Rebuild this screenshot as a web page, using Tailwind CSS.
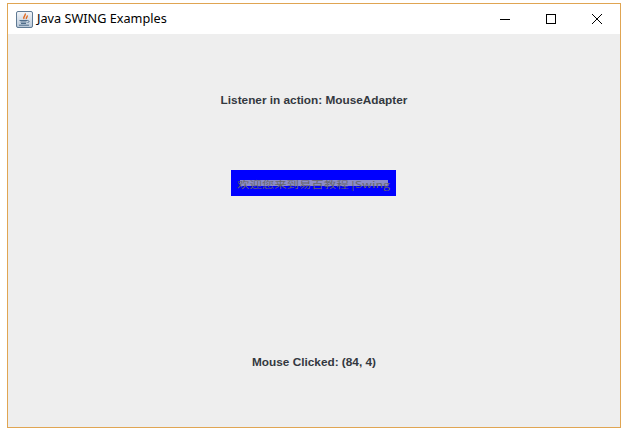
<!DOCTYPE html>
<html>
<head>
<meta charset="utf-8">
<script src="https://cdn.jsdelivr.net/npm/@tailwindcss/browser@4"></script>
</head>
<body class="bg-white w-[628px] h-[432px] overflow-hidden">
<div class="w-[628px] h-[432px] pl-[7px] pt-[3px]">
  <div class="w-[614px] h-[425px] border border-[#e0a552] flex flex-col bg-[#eeeeee]">
    <div class="h-[30px] bg-white flex items-center shrink-0">
      <div class="ml-[8px] mr-[4px] w-[17px] h-[17px] flex items-center justify-center">
        <svg width="17" height="17" viewBox="0 0 17 17">
          <defs><linearGradient id="g" x1="0" y1="0" x2="0" y2="1"><stop offset="0" stop-color="#f2f5f9"/><stop offset="1" stop-color="#b9c8d8"/></linearGradient></defs>
          <rect x="0.5" y="0.5" width="16" height="16" rx="1.5" fill="url(#g)" stroke="#5f7a94"/>
          <path d="M9 2.5 C10.5 4.5 6.5 5.5 8 8 M11 4.5 C12 6 9.5 6.5 10.5 8" stroke="#e2691f" stroke-width="1.4" fill="none"/>
          <path d="M3.5 9.5 H11.5 C13.5 9.5 13.5 11.5 11.5 11.5 M4.5 11 H10.5 M5 12.5 H10 M3 14.2 H13" stroke="#4f6d8a" stroke-width="1" fill="none"/>
        </svg>
      </div>
      <span class="font-['Noto_Sans',sans-serif] text-[12.7px] text-black">Java SWING Examples</span>
      <div class="ml-auto flex items-center text-black">
        <div class="w-[46px] h-[30px] flex items-center justify-center">
          <svg width="10" height="10" viewBox="0 0 10 10"><path d="M0 5.5 H10" stroke="#000" stroke-width="1"/></svg>
        </div>
        <div class="w-[46px] h-[30px] flex items-center justify-center">
          <svg width="10" height="10" viewBox="0 0 10 10"><rect x="0.5" y="0.5" width="9" height="9" fill="none" stroke="#000"/></svg>
        </div>
        <div class="w-[46px] h-[30px] flex items-center justify-center">
          <svg width="10" height="10" viewBox="0 0 10 10"><path d="M0 0 L10 10 M10 0 L0 10" stroke="#000" stroke-width="1"/></svg>
        </div>
      </div>
    </div>
    <div class="flex-1 flex flex-col items-center font-['Liberation_Sans',sans-serif] font-bold text-[11.8px] text-[#333840]">
      <div class="mt-[59px] h-[14px] leading-[14px]">Listener in action: MouseAdapter</div>
      <div class="mt-[63px] mr-[1px] w-[165px] h-[26px] bg-[#0000ff] flex items-center justify-center relative">
        <div class="absolute left-[9px] top-[10px] w-[148px] h-[6px] bg-[#8c8cc8]"></div>
        <span class="relative font-['Noto_Sans_CJK_SC',sans-serif] font-normal text-[12.4px] leading-[14px] text-[#66666c] whitespace-nowrap scale-y-[0.72] mt-[1px]">欢迎您来到易百教程 |Swing</span>
      </div>
      <div class="mt-[159px] h-[14px] leading-[14px]">Mouse Clicked: (84, 4)</div>
    </div>
  </div>
</div>
</body>
</html>
